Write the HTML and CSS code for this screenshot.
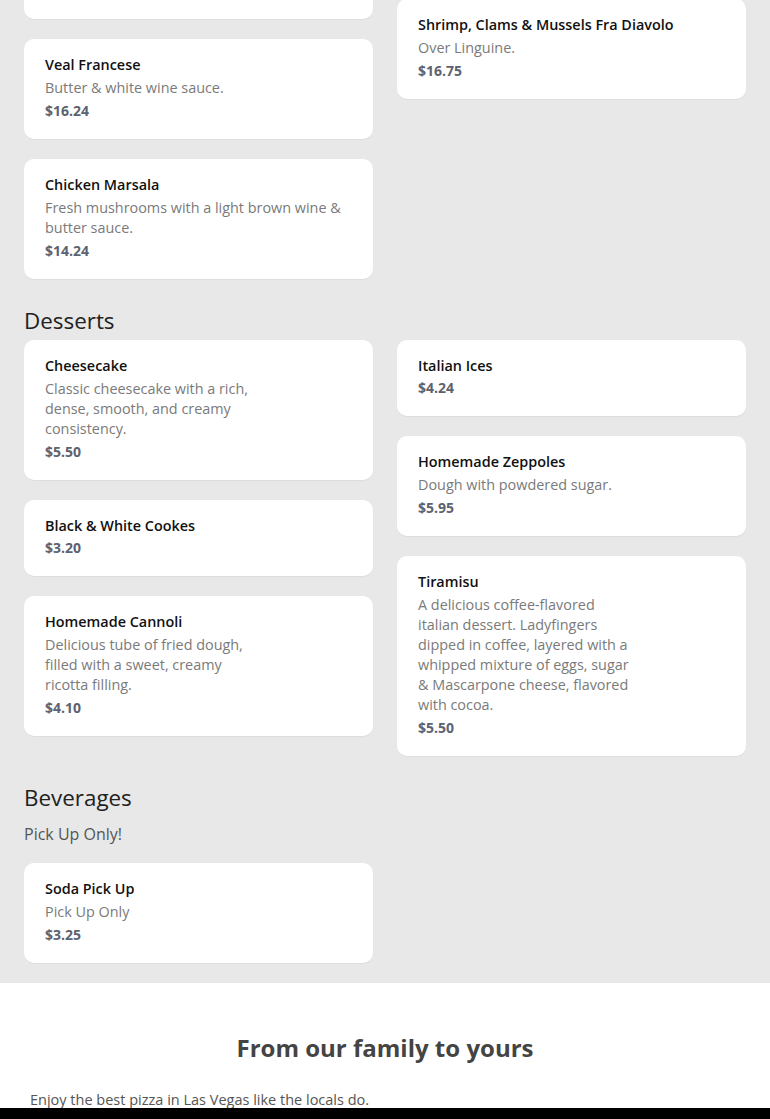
FILE: index.html
```html
<!DOCTYPE html>
<html lang="en">
<head>
  <meta charset="UTF-8">
  <meta name="viewport" content="width=device-width, initial-scale=1.0">
  <title>Menu</title>
  <link rel="stylesheet" href="styles.css">
</head>
<body>
  <main class="menu">
    <section class="menu-section menu-section--first">
      <div class="menu-grid">
        <div class="menu-col">
          <div class="item">
            <h3 class="item-name">Chicken Parmigiana</h3>
            <p class="item-desc">Breaded chicken breast topped with marinara sauce and melted mozzarella cheese, served over a side of pasta.</p>
            <p class="item-price">$15.24</p>
          </div>
          <div class="item">
            <h3 class="item-name">Veal Francese</h3>
            <p class="item-desc">Butter &amp; white wine sauce.</p>
            <p class="item-price">$16.24</p>
          </div>
          <div class="item">
            <h3 class="item-name">Chicken Marsala</h3>
            <p class="item-desc">Fresh mushrooms with a light brown wine &amp; butter sauce.</p>
            <p class="item-price">$14.24</p>
          </div>
        </div>
        <div class="menu-col">
          <div class="item">
            <h3 class="item-name">Shrimp Scampi</h3>
            <p class="item-desc">Garlic &amp; white wine sauce.</p>
            <p class="item-price">$16.75</p>
          </div>
          <div class="item">
            <h3 class="item-name">Shrimp, Clams &amp; Mussels Fra Diavolo</h3>
            <p class="item-desc">Over Linguine.</p>
            <p class="item-price">$16.75</p>
          </div>
        </div>
      </div>
    </section>

    <section class="menu-section">
      <h2 class="section-title">Desserts</h2>
      <div class="menu-grid">
        <div class="menu-col">
          <div class="item">
            <h3 class="item-name">Cheesecake</h3>
            <p class="item-desc narrow">Classic cheesecake with a rich, dense, smooth, and creamy consistency.</p>
            <p class="item-price">$5.50</p>
          </div>
          <div class="item">
            <h3 class="item-name">Black &amp; White Cookes</h3>
            <p class="item-price">$3.20</p>
          </div>
          <div class="item">
            <h3 class="item-name">Homemade Cannoli</h3>
            <p class="item-desc narrow">Delicious tube of fried dough, filled with a sweet, creamy ricotta filling.</p>
            <p class="item-price">$4.10</p>
          </div>
        </div>
        <div class="menu-col">
          <div class="item">
            <h3 class="item-name">Italian Ices</h3>
            <p class="item-price">$4.24</p>
          </div>
          <div class="item">
            <h3 class="item-name">Homemade Zeppoles</h3>
            <p class="item-desc narrow">Dough with powdered sugar.</p>
            <p class="item-price">$5.95</p>
          </div>
          <div class="item">
            <h3 class="item-name">Tiramisu</h3>
            <p class="item-desc narrow">A delicious coffee-flavored italian dessert. Ladyfingers dipped in coffee, layered with a whipped mixture of eggs, sugar &amp; Mascarpone cheese, flavored with cocoa.</p>
            <p class="item-price">$5.50</p>
          </div>
        </div>
      </div>
    </section>

    <section class="menu-section">
      <h2 class="section-title">Beverages</h2>
      <p class="section-note">Pick Up Only!</p>
      <div class="menu-grid">
        <div class="menu-col">
          <div class="item">
            <h3 class="item-name">Soda Pick Up</h3>
            <p class="item-desc">Pick Up Only</p>
            <p class="item-price">$3.25</p>
          </div>
        </div>
        <div class="menu-col"></div>
      </div>
    </section>
  </main>

  <footer class="about">
    <h2 class="about-title">From our family to yours</h2>
    <p class="about-text">Enjoy the best pizza in Las Vegas like the locals do.</p>
  </footer>

  <div class="bottom-bar"></div>
</body>
</html>
```

FILE: styles.css
```css
* {
  margin: 0;
  padding: 0;
  box-sizing: border-box;
}
body {
  font-family: "Open Sans", "Liberation Sans", sans-serif;
  font-size: 14px;
  color: #222;
  background: #fff;
}
.menu {
  background: #e8e8e8;
  padding: 0 24px 20px;
  /* page is scrolled part way into the entrees */
  margin-top: -121px;
}
.menu-section {
  margin-top: 28px;
}
.menu-section--first {
  margin-top: 0;
}
.section-title {
  font-size: 22.4px;
  font-weight: 400;
  line-height: 28px;
  color: #222;
  margin-bottom: 5px;
}
.section-note {
  font-size: 16px;
  line-height: 24px;
  color: #555;
  margin: 10px 0 17px;
}
.menu-grid {
  display: grid;
  grid-template-columns: 1fr 1fr;
  gap: 24px;
  align-items: start;
}
.menu-col {
  display: flex;
  flex-direction: column;
  gap: 20px;
}
.item {
  display: flex;
  flex-direction: column;
  background: #fff;
  border-radius: 10px;
  padding: 16px 20px 18px 21px;
  box-shadow: 0 1px 1px rgba(0,0,0,0.05);
}
.item-name {
  font-size: 14.4px;
  font-weight: 600;
  line-height: 20px;
  color: #111;
}
.item-desc {
  font-size: 14.4px;
  line-height: 20px;
  color: #7a7a7a;
  margin: 3px 0 1px;
}
.item-desc.narrow {
  max-width: 218px;
}
.item-price {
  font-size: 14px;
  font-weight: 700;
  line-height: 20px;
  color: #5d6270;
  margin-top: 2px;
}
.about {
  padding: 51px 30px 40px;
}
.about-title {
  font-size: 24px;
  font-weight: 700;
  line-height: 1.2;
  color: #444;
  text-align: center;
}
.about-text {
  font-size: 14.5px;
  line-height: 20px;
  color: #555;
  margin-top: 27px;
}
.bottom-bar {
  position: fixed;
  left: 0;
  right: 0;
  bottom: 0;
  height: 11px;
  background: #000;
}
```
